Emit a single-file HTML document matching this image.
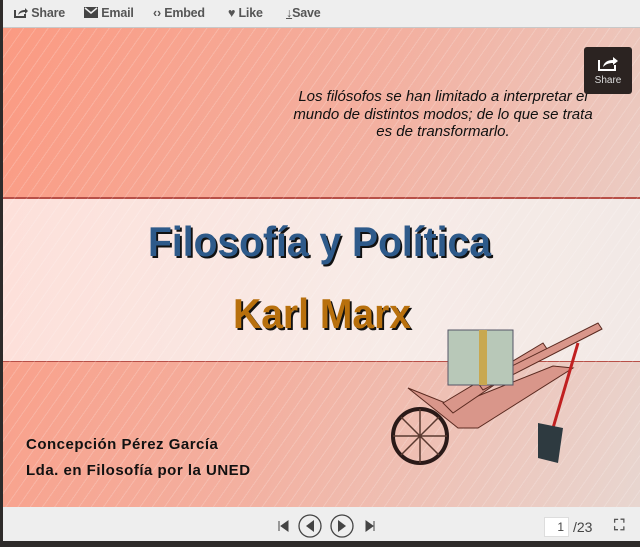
<!DOCTYPE html>
<html><head><meta charset="utf-8"><style>
*{margin:0;padding:0;box-sizing:border-box}
body{width:640px;height:547px;background:#2e2b2a;position:relative;overflow:hidden;font-family:"Liberation Sans",sans-serif}
#tb{position:absolute;left:3px;top:0;width:637px;height:28px;background:#eeeeee;border-bottom:1px solid #c8c8c8}
#tb span{position:absolute;top:6px;font-size:12.5px;font-weight:bold;color:#555;letter-spacing:-0.2px}
#slide{position:absolute;left:3px;top:28px;width:637px;height:479px;overflow:hidden;
background:linear-gradient(110deg,#fb9a82 0%,#f3b0a0 50%,#e8d6d0 100%)}
.stripes{position:absolute;inset:0;background:repeating-linear-gradient(-55deg,rgba(255,255,255,0) 0 9px,rgba(255,255,255,.18) 9px 10px)}
#mid{position:absolute;left:0;top:169px;width:100%;height:165px;background:linear-gradient(90deg,#fde0da,#f7ebe7 60%,#f2e9e6);border-top:2px solid #b85048;border-bottom:1px solid #b85048}
#bb{position:absolute;left:3px;top:507px;width:637px;height:34px;background:#eeeeee}
.t{position:absolute;font-weight:bold;white-space:nowrap;transform-origin:0 0}
</style></head><body>
<div id="tb">
<span style="left:11px"><svg width="14" height="11" style="vertical-align:-1px"><path d="M1 3v7h10V7" fill="none" stroke="#444" stroke-width="2"/><path d="M4 8c1-4 4-5 7-5V1l3 3-3 3V5c-3 0-5 1-7 3z" fill="#444"/></svg> Share</span>
<span style="left:81px"><svg width="14" height="11" style="vertical-align:-1px"><rect x="0" y="0" width="14" height="11" fill="#444"/><path d="M1 1l6 5 6-5" fill="none" stroke="#eee" stroke-width="1.5"/></svg> Email</span>
<span style="left:150px">‹› Embed</span>
<span style="left:225px">♥ Like</span>
<span style="left:283px"><u>↓</u>Save</span>
</div>
<div id="slide">
<div id="mid"></div>
<div class="stripes"></div>
<div style="position:absolute;left:265px;top:60px;width:350px;text-align:center;font-style:italic;font-size:15px;line-height:17.5px;color:#111">Los filósofos se han limitado a interpretar el<br>mundo de distintos modos; de lo que se trata<br>es de transformarlo.</div>
<div class="t" style="left:145px;top:190px;font-size:42px;color:#2e5a8a;transform:scaleX(.93);text-shadow:2px 2px 0 #111">Filosofía y Política</div>
<div class="t" style="left:230px;top:262px;font-size:42px;color:#b8700d;transform:scaleX(.93);text-shadow:2px 2px 0 #111">Karl Marx</div>
<div class="t" style="left:23px;top:408px;font-size:15px;letter-spacing:0.5px;color:#111">Concepción Pérez García</div>
<div class="t" style="left:23px;top:434px;font-size:15px;letter-spacing:0.5px;color:#111">Lda. en Filosofía por la UNED</div>
<svg style="position:absolute;left:380px;top:280px" width="240" height="160">
<path d="M25 80l45 18 100-40 20 2-95 60-20 0z" fill="#d9968a" stroke="#5a2a20"/>
<path d="M60 95L160 35l4 6L70 105z" fill="#d9968a" stroke="#5a2a20"/>
<path d="M95 75L215 15l4 6L100 82z" fill="#d9968a" stroke="#5a2a20"/>
<rect x="65" y="22" width="65" height="55" fill="#b8c8b8" stroke="#556"/>
<rect x="96" y="22" width="8" height="55" fill="#c8a850"/>
<circle cx="37" cy="128" r="27" fill="none" stroke="#2a1a18" stroke-width="4"/>
<path d="M37 101v54M10 128h54M18 109l38 38M56 109l-38 38" stroke="#5a3a30" stroke-width="1.5"/>
<path d="M195 35l-25 85" stroke="#c02020" stroke-width="3"/>
<path d="M155 115l25 5-5 35-20-5z" fill="#2e3a40"/>
</svg>
<div style="position:absolute;left:581px;top:19px;width:48px;height:47px;background:#2b2321;border-radius:3px;color:#ddd;font-size:10px;text-align:center">
<svg width="22" height="18" style="margin-top:7px"><path d="M2 6v10h16v-5" fill="none" stroke="#fff" stroke-width="2"/><path d="M6 13c1-5 5-7 10-7V3l5 4-5 4V9c-4 0-7 1-10 4z" fill="#fff"/></svg><br>Share</div>
</div>
<div id="bb">
<svg style="position:absolute;left:270px;top:6px" width="110" height="26">
<path d="M6 8v10M15 8l-7 5 7 5z" fill="#444" stroke="#444"/>
<circle cx="37" cy="13" r="11" fill="none" stroke="#444" stroke-width="1.3"/><path d="M41 7l-8 6 8 6z" fill="#444"/>
<circle cx="69" cy="13" r="11" fill="none" stroke="#444" stroke-width="1.3"/><path d="M65 7l8 6-8 6z" fill="#444"/>
<path d="M93 8l7 5-7 5zM101 8v10" fill="#444" stroke="#444"/>
</svg>
<div style="position:absolute;left:541px;top:10px;width:25px;height:20px;background:#fff;border:1px solid #ddd;font-size:12px;text-align:right;padding:2px 4px 0 0;color:#444">1</div>
<div style="position:absolute;left:570px;top:12px;font-size:14px;color:#444">/23</div>
<div style="position:absolute;left:611px;top:10px;font-size:15px;color:#555;font-weight:bold">⛶</div>
</div>
</body></html>
